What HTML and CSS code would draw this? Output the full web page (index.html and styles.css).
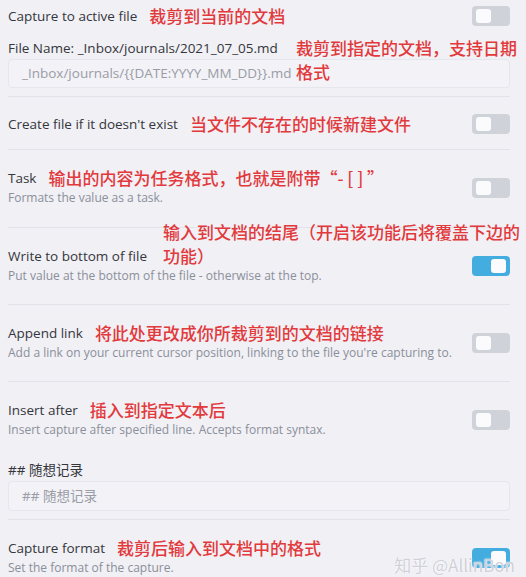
FILE: index.html
```html
<!DOCTYPE html>
<html lang="zh">
<head>
<meta charset="utf-8">
<title>QuickAdd capture settings</title>
<link rel="stylesheet" href="styles.css">
</head>
<body>
<div class="panel">
  <section class="group">
    <div class="item first">
      <div class="info">
        <div class="name">Capture to active file<span class="note">裁剪到当前的文档</span></div>
      </div>
      <div class="toggle"><span class="knob"></span></div>
    </div>
    <div class="field">
      <div class="name rel">File Name: _Inbox/journals/2021_07_05.md<span class="note over file-note">裁剪到指定的文档，支持日期<br>格式</span></div>
      <div class="input">_Inbox/journals/{{DATE:YYYY_MM_DD}}.md</div>
    </div>
  </section>

  <section class="item single">
    <div class="info">
      <div class="name">Create file if it doesn't exist<span class="note">当文件不存在的时候新建文件</span></div>
    </div>
    <div class="toggle"><span class="knob"></span></div>
  </section>

  <section class="item task">
    <div class="info">
      <div class="name">Task<span class="note">输出的内容为任务格式，也就是附带“- [ ] ”</span></div>
      <div class="desc">Formats the value as a task.</div>
    </div>
    <div class="toggle"><span class="knob"></span></div>
  </section>

  <section class="item">
    <div class="info">
      <div class="name rel">Write to bottom of file<span class="note over bottom-note">输入到文档的结尾（开启该功能后将覆盖下边的<br>功能）</span></div>
      <div class="desc">Put value at the bottom of the file - otherwise at the top.</div>
    </div>
    <div class="toggle on"><span class="knob"></span></div>
  </section>

  <section class="item">
    <div class="info">
      <div class="name">Append link<span class="note">将此处更改成你所裁剪到的文档的链接</span></div>
      <div class="desc">Add a link on your current cursor position, linking to the file you're capturing to.</div>
    </div>
    <div class="toggle"><span class="knob"></span></div>
  </section>

  <section class="group">
    <div class="item plain">
      <div class="info">
        <div class="name">Insert after<span class="note">插入到指定文本后</span></div>
        <div class="desc">Insert capture after specified line. Accepts format syntax.</div>
      </div>
      <div class="toggle"><span class="knob"></span></div>
    </div>
    <div class="field flush">
      <div class="name">## 随想记录</div>
      <div class="input tall">## 随想记录</div>
    </div>
  </section>

  <section class="item last">
    <div class="info">
      <div class="name">Capture format<span class="note">裁剪后输入到文档中的格式</span></div>
      <div class="desc">Set the format of the capture.</div>
    </div>
    <div class="toggle on"><span class="knob"></span></div>
  </section>

  <div class="watermark">知乎 @AllinBon</div>
</div>
</body>
</html>
```

FILE: styles.css
```css
* { box-sizing: border-box; }

html, body {
  margin: 0;
  padding: 0;
  background: #f0f0f5;
  overflow: hidden;
}

body {
  font-family: "Open Sans", "Noto Sans", "Noto Sans CJK SC", sans-serif;
  color: #34353a;
  width: 526px;
  height: 577px;
}

.panel {
  position: relative;
  padding: 0 16px 0 8px;
  height: 577px;
}

.group,
.item {
  border-bottom: 1px solid #e2e2ea;
}

.group .item {
  border-bottom: none;
}

.item {
  display: flex;
  align-items: center;
  justify-content: space-between;
  padding: 18px 0 18px;
}

.item.first {
  padding: 6px 0 0;
}

.item.single {
  padding: 17px 0 15px;
}

.item.task {
  padding-bottom: 19px;
}

.item.plain {
  padding: 18px 0 20px;
}

.item.last {
  border-bottom: none;
}

.info {
  flex: 1;
  min-width: 0;
}

.name {
  font-size: 13.5px;
  line-height: 20px;
  height: 20px;
  white-space: nowrap;
  color: #35363b;
}

.rel {
  position: relative;
}

.desc {
  font-size: 12px;
  line-height: 20px;
  color: #8b8f99;
  white-space: nowrap;
}

.note {
  font-family: "Noto Sans CJK SC", sans-serif;
  font-size: 17px;
  font-weight: 500;
  line-height: 20px;
  color: #e2393c;
  margin-left: 12px;
  vertical-align: top;
}

.note.over {
  position: absolute;
  margin-left: 0;
  line-height: 24px;
  white-space: nowrap;
}

.file-note {
  left: 288px;
  top: -2px;
}

.bottom-note {
  left: 155px;
  bottom: -2px;
}

.field {
  padding: 12px 0 8px;
}

.field.flush {
  padding-top: 0;
}

.field .input {
  margin-top: 1px;
  height: 29px;
  border: 1px solid #e6e6ee;
  border-radius: 4px;
  background: #f2f2f7;
  padding: 0 13px;
  font-size: 13.5px;
  line-height: 27px;
  color: #9a9ca6;
  white-space: nowrap;
}

.field .input.tall {
  height: 30px;
  margin-top: 1px;
  line-height: 29px;
}

.toggle {
  position: relative;
  flex: none;
  width: 38px;
  height: 20px;
  border-radius: 4px;
  background: #d0d2da;
}

.toggle .knob {
  position: absolute;
  top: 3px;
  left: 4px;
  width: 15px;
  height: 14px;
  border-radius: 3px;
  background: #fbfbfd;
}

.toggle.on {
  background: #44ade0;
}

.toggle.on .knob {
  left: auto;
  right: 4px;
}

.watermark {
  position: absolute;
  right: 11px;
  bottom: 2px;
  font-family: "Noto Sans CJK SC", sans-serif;
  font-size: 17px;
  line-height: 20px;
  color: #cfd0d8;
  text-shadow: 0 0 1px #ffffff, 0 0 2px #ffffff;
}
```
